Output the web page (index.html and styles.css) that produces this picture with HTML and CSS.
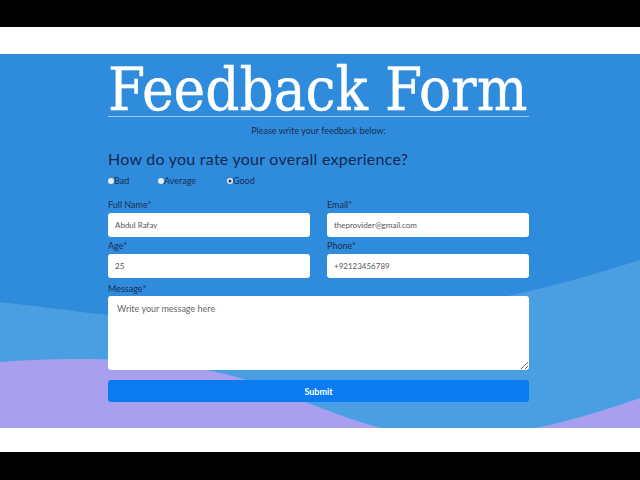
FILE: index.html
```html
<!DOCTYPE html>
<html lang="en">
<head>
<meta charset="utf-8">
<title>Feedback Form</title>
<link rel="stylesheet" href="styles.css">
</head>
<body>
<div class="bar-black"></div>
<div class="bar-white"></div>
<section class="stage">
  <svg class="waves" viewBox="0 0 640 374" preserveAspectRatio="none" aria-hidden="true">
    <path class="wave-light" d="M0,248 C120,262 260,285 400,262 C480,250 560,232 640,206 V374 H0 Z"/>
    <path class="wave-purple" d="M0,308 C80,302 170,304 240,324 C320,350 380,386 460,384 C520,382 590,362 640,344 V374 H0 Z"/>
  </svg>
  <form class="form">
    <h1 class="title">Feedback Form</h1>
    <p class="subtitle">Please write your feedback below:</p>
    <h2 class="question">How do you rate your overall experience?</h2>
    <div class="ratings">
      <label class="rating rating-bad"><input type="radio" name="rate" class="radio">Bad</label>
      <label class="rating rating-avg"><input type="radio" name="rate" class="radio">Average</label>
      <label class="rating"><input type="radio" name="rate" class="radio" checked>Good</label>
    </div>
    <div class="grid">
      <div class="field">
        <label class="label">Full Name*</label>
        <input class="input" type="text" value="Abdul Rafay">
      </div>
      <div class="field">
        <label class="label">Email*</label>
        <input class="input" type="text" value="theprovider@gmail.com">
      </div>
      <div class="field">
        <label class="label">Age*</label>
        <input class="input" type="text" value="25">
      </div>
      <div class="field">
        <label class="label">Phone*</label>
        <input class="input" type="text" value="+92123456789">
      </div>
    </div>
    <div class="field field-message">
      <label class="label">Message*</label>
      <textarea class="textarea" placeholder="Write your message here"></textarea>
    </div>
    <button class="submit" type="button">Submit</button>
  </form>
</section>
<div class="bar-white bar-white-bottom"></div>
<div class="bar-black bar-bottom"></div>
</body>
</html>
```
FILE: styles.css
```css
* { box-sizing: border-box; }
html, body { margin: 0; padding: 0; }
body {
  background: #000;
  width: 640px;
  height: 480px;
  overflow: hidden;
  font-family: Lato, "Noto Sans", sans-serif;
}
.bar-black { height: 27px; background: #000; }
.bar-bottom { height: 28px; }
.bar-white { height: 27px; background: #fff; }
.bar-white-bottom { height: 24px; }

.stage {
  position: relative;
  height: 374px;
  background: #2f8cdc;
  overflow: hidden;
}
.waves {
  position: absolute;
  left: 0; top: 0;
  width: 640px; height: 374px;
}
.wave-light { fill: #4a9fe2; }
.wave-purple { fill: #a8a0ef; }

.form {
  position: relative;
  width: 421px;
  margin: 0 0 0 108px;
  padding-top: 10px;
}
.title {
  margin: 0;
  font-family: "DejaVu Serif Condensed", "DejaVu Serif", serif;
  font-stretch: condensed;
  font-weight: normal;
  font-size: 59.5px;
  line-height: 52px;
  color: #fff;
  border-bottom: 1px solid #9cc9f0;
  white-space: nowrap;
  -webkit-text-stroke: 0.4px #fff;
}
.subtitle {
  margin: 8px 0 0;
  text-align: center;
  font-size: 9px;
  line-height: 12px;
  color: #1a2c55;
}
.question {
  margin: 12px 0 0;
  font-weight: normal;
  font-size: 16px;
  line-height: 20px;
  letter-spacing: 0.25px;
  color: #13284f;
}
.ratings {
  display: flex;
  margin-top: 6px;
  height: 12px;
  align-items: center;
}
.rating {
  display: flex;
  align-items: center;
  font-size: 9px;
  line-height: 12px;
  color: #1a2c55;
}
.rating-bad { width: 50px; }
.rating-avg { width: 69px; }
.radio {
  appearance: none;
  -webkit-appearance: none;
  width: 6px;
  height: 6px;
  margin: 0;
  border-radius: 50%;
  background: #e6eef8;
  border: none;
}
.radio:checked {
  box-shadow: inset 0 0 0 1.5px #e6eef8, inset 0 0 0 3px #2a3a5a;
}
.grid {
  display: grid;
  grid-template-columns: 202px 202px;
  column-gap: 17px;
  row-gap: 3px;
  margin-top: 12px;
}
.field { display: flex; flex-direction: column; }
.label {
  font-size: 9px;
  line-height: 12px;
  color: #1a2c55;
  margin-bottom: 2px;
}
.input {
  height: 24px;
  border: none;
  border-radius: 3px;
  background: #fff;
  padding: 0 7px;
  font-family: Lato, "Noto Sans", sans-serif;
  font-size: 8px;
  color: #555;
  outline: none;
}
.field-message { margin-top: 5px; }
.field-message .label { margin-bottom: 1px; }
.textarea {
  height: 74px;
  border: none;
  border-radius: 3px;
  background: #fff;
  padding: 7px 9px;
  font-family: Lato, "Noto Sans", sans-serif;
  font-size: 9px;
  color: #555;
  resize: vertical;
  outline: none;
  display: block;
}
.textarea::placeholder { color: #666; }
.submit {
  display: block;
  width: 100%;
  height: 22px;
  margin-top: 10px;
  border: none;
  border-radius: 3px;
  background: #0a7bf0;
  color: #fff;
  font-family: Lato, "Noto Sans", sans-serif;
  font-weight: bold;
  font-size: 9px;
  padding: 0;
}
```
